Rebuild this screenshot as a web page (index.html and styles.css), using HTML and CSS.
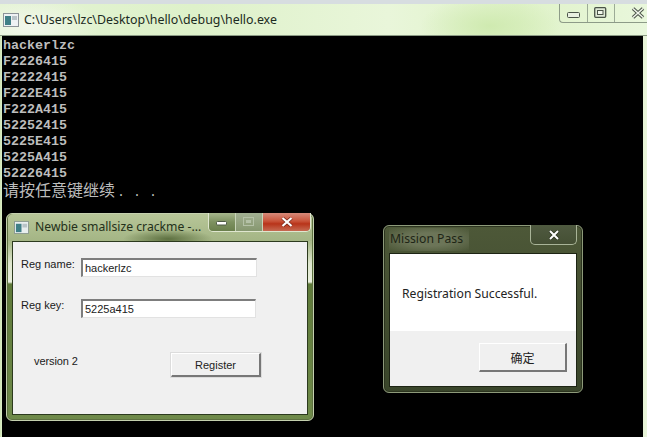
FILE: index.html
```html
<!DOCTYPE html>
<html lang="en">
<head>
<meta charset="utf-8">
<title>Crackme</title>
<link rel="stylesheet" href="styles.css">
</head>
<body>
<section class="console">
  <header class="console-bar">
    <svg class="app-icon" viewBox="0 0 16 14"><rect x=".5" y=".5" width="15" height="13" fill="#eef2f4" stroke="#8b9398"/><rect x="2" y="3" width="6" height="9" fill="#3f7f86"/><rect x="9" y="3" width="5" height="4" fill="#b9c4c8"/></svg>
    <span class="console-title">C:\Users\lzc\Desktop\hello\debug\hello.exe</span>
    <div class="console-controls">
      <span class="ctl ctl-first"><svg viewBox="0 0 14 8" class="ico-min"><rect x=".5" y=".5" width="12" height="5" rx="1" fill="#e8f0e0" stroke="#4a5348"/></svg></span>
      <span class="ctl"><svg viewBox="0 0 14 12" class="ico-max"><rect x=".7" y=".7" width="11" height="9.6" rx="1" fill="#dfe9d6" stroke="#4a5348" stroke-width="1.3"/><rect x="3.5" y="3.5" width="5.5" height="4" fill="#f1f6ea" stroke="#4a5348"/></svg></span>
      <span class="ctl ctl-close"><svg viewBox="0 0 14 12" class="ico-x"><path d="M2 1.5 L12 10.5 M12 1.5 L2 10.5" stroke="#4a5348" stroke-width="3.6"/><path d="M2 1.5 L12 10.5 M12 1.5 L2 10.5" stroke="#f0f5ea" stroke-width="1.6"/></svg></span>
    </div>
  </header>
  <div class="console-body">
    <div class="line">hackerlzc</div>
    <div class="line">F2226415</div>
    <div class="line">F2222415</div>
    <div class="line">F222E415</div>
    <div class="line">F222A415</div>
    <div class="line">52252415</div>
    <div class="line">5225E415</div>
    <div class="line">5225A415</div>
    <div class="line">52226415</div>
    <div class="line cjk">请按任意键继续<span class="dots">. . .</span></div>
  </div>
</section>

<section class="win crackme">
  <header class="win-bar">
    <svg class="app-icon small" viewBox="0 0 16 14"><rect x=".5" y=".5" width="15" height="13" fill="#e8eeee" stroke="#8b9a90"/><rect x="2" y="3" width="6" height="9" fill="#3f7f86"/><rect x="9" y="3" width="5" height="4" fill="#b9c4c8"/></svg>
    <span class="win-title">Newbie smallsize crackme -...</span>
    <div class="win-controls">
      <span class="wc"><svg viewBox="0 0 12 6" class="ico-wmin"><rect x=".5" y=".5" width="10" height="3.5" rx="1" fill="#fff" stroke="#4e5a45"/></svg></span>
      <span class="wc wc-dim"><svg viewBox="0 0 12 10" class="ico-wmax"><rect x=".5" y=".5" width="10" height="8" fill="none" stroke="#b4c1a6"/><rect x="3" y="3" width="5" height="3" fill="#b4c1a6"/></svg></span>
      <span class="wc wc-close"><svg viewBox="0 0 14 10" class="ico-wx"><path d="M2.5 1 L11.5 9 M11.5 1 L2.5 9" stroke="#7a2a1c" stroke-width="3.6"/><path d="M2.5 1 L11.5 9 M11.5 1 L2.5 9" stroke="#fff" stroke-width="2.2"/></svg></span>
    </div>
  </header>
  <div class="win-client form">
    <div class="form-row">
      <label class="form-label">Reg name:</label>
      <div class="field">hackerlzc</div>
    </div>
    <div class="form-row key-row">
      <label class="form-label">Reg key:</label>
      <div class="field field-key">5225a415</div>
    </div>
    <div class="form-foot">
      <span class="version">version 2</span>
      <button class="btn btn-register" type="button">Register</button>
    </div>
  </div>
</section>

<section class="win mission">
  <header class="win-bar mission-bar">
    <span class="win-title mission-title">Mission Pass</span>
    <span class="mission-close"><svg viewBox="0 0 14 10" class="ico-wx"><path d="M3 1 L11 9 M11 1 L3 9" stroke="#2c3322" stroke-width="3.4"/><path d="M3 1 L11 9 M11 1 L3 9" stroke="#fff" stroke-width="2"/></svg></span>
  </header>
  <div class="win-client dialog">
    <div class="dialog-msg">Registration Successful.</div>
    <div class="dialog-foot">
      <button class="btn btn-ok" type="button">确定</button>
    </div>
  </div>
</section>
</body>
</html>
```
FILE: styles.css
```css
* { box-sizing: border-box; }
html, body { margin: 0; padding: 0; }
body {
  position: relative;
  width: 647px;
  height: 437px;
  overflow: hidden;
  background: #000;
  font-family: "Liberation Sans", Arial, sans-serif;
}

/* Console window */
.console {
  position: absolute;
  left: 0;
  top: 0;
  width: 647px;
  height: 437px;
  display: flex;
  flex-direction: column;
  background: linear-gradient(90deg, #cfe3b4 0, #dceec8 2px, #000 2px, #000 643px, #e6f3d6 643px, #eaf5dc 647px);
}
.console-bar {
  flex: none;
  position: relative;
  height: 36px;
  display: flex;
  align-items: center;
  padding: 1px 0 0 3px;
  border-top: 4px solid #d7dde0;
  border-bottom: 1px solid #8b9a84;
  background:
    radial-gradient(ellipse 70px 30px at 490px 22px, #cfeab0, transparent),
    radial-gradient(ellipse 70px 30px at 30px 22px, #f2f7ec, transparent),
    linear-gradient(90deg, #e3f3d2, #def1ca 30%, #e9f6da 60%, #dff2c8 80%, #e9f7dc);
}
.app-icon { width: 16px; height: 14px; flex: none; }
.console-title {
  margin-left: 5px;
  padding-bottom: 2px;
  font-family: "Noto Sans", sans-serif;
  font-size: 12.4px;
  color: #1c2a22;
  white-space: nowrap;
}
.console-controls {
  position: absolute;
  right: 0;
  top: 0;
  height: 19px;
  width: 88px;
  display: flex;
  border: 1px solid #8d9b88;
  border-top: 0;
  border-right: 0;
  border-bottom-left-radius: 4px;
}
.ctl {
  width: 27px;
  display: flex;
  align-items: center;
  justify-content: center;
  border-left: 1px solid #9cab96;
}
.ctl-first { border-left: 0; }
.ctl-close { flex: 1; padding-left: 13px; }
.ico-min { width: 14px; height: 8px; margin-top: 5px; }
.ico-max { width: 14px; height: 12px; }
.ico-x { width: 14px; height: 12px; flex: none; }
.console-body {
  flex: 1;
  padding: 2px 0 0 3px;
  color: #bdbdbd;
  font-family: "Liberation Mono", monospace;
  font-size: 13.33px;
  font-weight: bold;
  line-height: 16px;
}
.line { height: 16px; }
.cjk {
  font-family: "Noto Sans CJK SC", sans-serif;
  font-size: 16px;
  font-weight: normal;
  line-height: 14px;
}
.dots { font-family: "Liberation Mono", monospace; font-size: 13.33px; margin-left: 2px; }

/* Floating windows */
.win {
  position: absolute;
  display: flex;
  flex-direction: column;
  border-radius: 6px;
  border: 1px solid #c4d0ae;
  padding: 0 5px 5px;
}
.crackme {
  left: 6px;
  top: 213px;
  width: 308px;
  height: 208px;
  background: linear-gradient(180deg, #b9c799 0, #a9ba8a 14%, #dfe7cf 24%, #e9efdd 33%, #5f7a3a 34%, #6f8a4a 100%);
  box-shadow: inset 0 0 0 1px #5d7040;
}
.mission {
  left: 383px;
  top: 225px;
  width: 200px;
  height: 168px;
  border-color: #8d9a7a;
  background: linear-gradient(180deg, #4d5838, #434e30 50%, #39452a);
  box-shadow: inset 0 0 0 1px #2b331e;
}
.win-bar {
  flex: none;
  position: relative;
  height: 27px;
  display: flex;
  align-items: center;
  padding-left: 1px;
}
.crackme .win-bar {
  background:
    radial-gradient(ellipse 45px 10px at 160px 25px, #5d7040 0, transparent 100%),
    linear-gradient(180deg, #b7c698, #a4b585);
  border-radius: 5px 5px 0 0;
  margin: 0 -4px;
  padding-left: 6px;
}
.app-icon.small { width: 15px; height: 13px; }
.win-title {
  margin-left: 6px;
  padding-bottom: 2px;
  font-family: "Noto Sans", sans-serif;
  font-size: 12.2px;
  color: #24301a;
  white-space: nowrap;
}
.win-controls {
  position: absolute;
  right: 1px;
  top: -1px;
  display: flex;
  height: 19px;
  width: 103px;
  border: 1px solid #dfe6cf;
  border-top: 0;
  border-radius: 0 0 5px 5px;
  overflow: hidden;
}
.wc {
  width: 27px;
  display: flex;
  align-items: center;
  justify-content: center;
  background: linear-gradient(180deg, #a6b68c, #7d9160 50%, #6a7f4c);
  border-right: 1px solid #c8d4b8;
}
.wc-dim { background: linear-gradient(180deg, #a2b092, #86976f); }
.wc-close {
  flex: 1;
  border-right: 0;
  background: linear-gradient(180deg, #d68a7a, #c9543a 45%, #b8341a 60%, #c66a52);
}
.ico-wmin { width: 12px; height: 6px; margin-top: 3px; }
.ico-wmax { width: 12px; height: 10px; }
.ico-wx { width: 14px; height: 10px; }
.win-client {
  flex: 1;
  border: 1px solid #2c3a1e;
  background: #f0f0f0;
  font-size: 11px;
  color: #111;
}
.form {
  display: flex;
  flex-direction: column;
  padding: 16px 0 0 8px;
}
.form-row {
  display: flex;
  align-items: flex-start;
}
.key-row { margin-top: 22px; }
.form-label {
  width: 60px;
  color: #1a1a1a;
}
.field {
  width: 176px;
  height: 19px;
  background: #fff;
  border: 1px solid #e2e2e2;
  border-top: 2px solid #7d7d7d;
  border-left: 2px solid #7d7d7d;
  padding: 1px 0 0 2px;
  line-height: 14px;
  color: #222;
}
.field-key { width: 175px; }
.form-foot {
  display: flex;
  align-items: flex-start;
  margin-top: 35px;
}
.version {
  margin-left: 13px;
  width: 137px;
  padding-top: 2px;
  letter-spacing: -0.1px;
  color: #1a1a1a;
}
.btn {
  font-family: inherit;
  font-size: 11px;
  color: #222;
  background: #f0f0f0;
  border: 1px solid #fff;
  border-right: 2px solid #777;
  border-bottom: 2px solid #777;
  box-shadow: 0 0 0 1px #dcdcdc;
  padding: 0;
}
.btn-register { width: 90px; height: 24px; }
.mission-bar { height: 27px; }
.mission-title {
  margin-left: -1px;
  color: #1e2516;
  padding: 2px 6px 4px 1px;
  background: radial-gradient(ellipse at center, #6c7558 40%, transparent 100%);
}
.mission-close {
  position: absolute;
  right: 0;
  top: -1px;
  width: 47px;
  height: 20px;
  display: flex;
  align-items: center;
  justify-content: center;
  border: 1px solid #a9b498;
  border-top: 0;
  border-radius: 0 0 5px 5px;
  background: linear-gradient(180deg, #4f5a40, #454f34);
}
.dialog {
  display: flex;
  flex-direction: column;
  border-color: #1d2414;
}
.dialog-msg {
  flex: none;
  height: 77px;
  background: #fff;
  padding: 33px 0 0 12px;
  font-family: "Noto Sans", "Liberation Sans", sans-serif;
  font-size: 12.2px;
  line-height: 14px;
  color: #222;
}
.dialog-foot {
  flex: 1;
  background: #f0f0f0;
  display: flex;
  justify-content: flex-end;
  padding: 12px 9px 0 0;
}
.btn-ok {
  width: 88px;
  height: 29px;
  font-family: "Noto Sans CJK SC", sans-serif;
  font-size: 12px;
  box-shadow: none;
}
```
